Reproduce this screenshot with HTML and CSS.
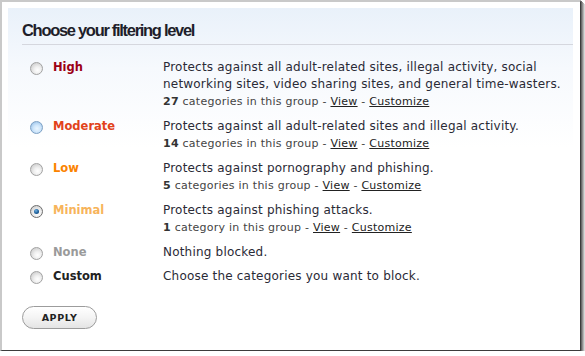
FILE: index.html
```html
<!DOCTYPE html>
<html>
<head>
<meta charset="utf-8">
<link rel="stylesheet" href="styles.css">
</head>
<body>
<div class="frame">
  <div class="panel">
    <h1 class="title">Choose your filtering level</h1>
    <div class="levels">
      <div class="level">
        <span class="radio"></span>
        <span class="name high">High</span>
        <div class="desc">
          <div class="text">Protects against all adult-related sites, illegal activity, social<br>networking sites, video sharing sites, and general time-wasters.</div>
          <div class="meta"><b>27</b> categories in this group - <a href="#">View</a> - <a href="#">Customize</a></div>
        </div>
      </div>
      <div class="level">
        <span class="radio hover"></span>
        <span class="name moderate">Moderate</span>
        <div class="desc">
          <div class="text">Protects against all adult-related sites and illegal activity.</div>
          <div class="meta"><b>14</b> categories in this group - <a href="#">View</a> - <a href="#">Customize</a></div>
        </div>
      </div>
      <div class="level">
        <span class="radio"></span>
        <span class="name low">Low</span>
        <div class="desc">
          <div class="text">Protects against pornography and phishing.</div>
          <div class="meta"><b>5</b> categories in this group - <a href="#">View</a> - <a href="#">Customize</a></div>
        </div>
      </div>
      <div class="level">
        <span class="radio checked"></span>
        <span class="name minimal">Minimal</span>
        <div class="desc">
          <div class="text">Protects against phishing attacks.</div>
          <div class="meta"><b>1</b> category in this group - <a href="#">View</a> - <a href="#">Customize</a></div>
        </div>
      </div>
      <div class="level">
        <span class="radio"></span>
        <span class="name none">None</span>
        <div class="desc">
          <div class="text">Nothing blocked.</div>
        </div>
      </div>
      <div class="level">
        <span class="radio"></span>
        <span class="name custom">Custom</span>
        <div class="desc">
          <div class="text">Choose the categories you want to block.</div>
        </div>
      </div>
    </div>
    <button class="apply">APPLY</button>
  </div>
</div>
</body>
</html>
```

FILE: styles.css
```css
html, body {
  margin: 0;
  padding: 0;
  background: #fff;
}
.frame {
  border-left: 2px solid #c9c9c9;
  border-top: 2px solid #c9c9c9;
  border-right: 1px solid #3c3c3c;
  border-bottom: 1px solid #3c3c3c;
  box-shadow: 1px 1px 0 #6a6a6a, 2px 2px 0 #8f8f8f, 3px 3px 0 #b5b5b5, 4px 4px 0 #d8d8d8;
  background: #fff;
  padding: 6px 0 0 6px;
  box-sizing: border-box;
  width: 581px;
  height: 351px;
}
.panel {
  width: 565px;
  height: 330px;
  box-sizing: border-box;
  padding: 12px 0 0 14px;
  background: linear-gradient(#e9f1fa 0, #f6f9fd 60px, #ffffff 140px);
  font-family: "DejaVu Sans", Verdana, sans-serif;
  font-size: 11px;
  color: #2a2a36;
}
.title {
  margin: 0;
  font-family: "Liberation Sans", Arial, sans-serif;
  font-size: 16.5px;
  line-height: 20px;
  letter-spacing: -1.3px;
  font-weight: bold;
  color: #1e1e2a;
  padding-bottom: 4px;
  border-bottom: 1px solid #d5d7de;
}
.levels {
  margin-top: 14px;
  display: flex;
  flex-direction: column;
  gap: 7px;
}
.level {
  display: grid;
  grid-template-columns: 13px 100px 1fr;
  column-gap: 10px;
  padding-left: 8px;
  align-items: start;
}
.radio {
  width: 13px;
  height: 13px;
  box-sizing: border-box;
  border-radius: 50%;
  border: 1px solid #a2a2a2;
  background: radial-gradient(circle at 60% 65%, #ffffff 0, #f0f0f0 35%, #c8c8c8 90%);
  margin-top: 3px;
  position: relative;
}
.radio.hover {
  border-color: #7ca0c4;
  background: radial-gradient(circle at 55% 60%, #eaf6ff 0, #cfe6fb 40%, #8fbbe5 95%);
}
.radio.checked {
  border-color: #6d6d6d;
}
.radio.checked::after {
  content: "";
  position: absolute;
  left: 3px;
  top: 3px;
  width: 5px;
  height: 5px;
  border-radius: 50%;
  background: radial-gradient(circle at 40% 35%, #6fb0e0 0, #1d5f9a 55%, #0b3a66 100%);
}
.name {
  font-weight: bold;
  font-size: 11.5px;
  line-height: 17px;
}
.high { color: #9c0014; }
.moderate { color: #e2421a; }
.low { color: #fb8300; }
.minimal { color: #f7b45b; }
.none { color: #9a9a9a; }
.custom { color: #222; }
.text {
  font-size: 12px;
  letter-spacing: 0.2px;
  line-height: 17px;
}
.meta {
  font-size: 11px;
  letter-spacing: 0.25px;
  line-height: 18px;
  color: #444;
}
.meta b {
  color: #333;
}
.meta a {
  color: #222;
  text-decoration: underline;
}
.apply {
  display: block;
  margin-top: 21px;
  width: 75px;
  height: 23px;
  border: 1px solid #9c9c9c;
  border-radius: 12px;
  background: linear-gradient(#ffffff 0, #f4f4f4 50%, #e4e4e4 100%);
  font-family: "DejaVu Sans", Verdana, sans-serif;
  font-weight: bold;
  font-size: 9.5px;
  letter-spacing: 0.6px;
  color: #222;
  padding: 0;
}
```
